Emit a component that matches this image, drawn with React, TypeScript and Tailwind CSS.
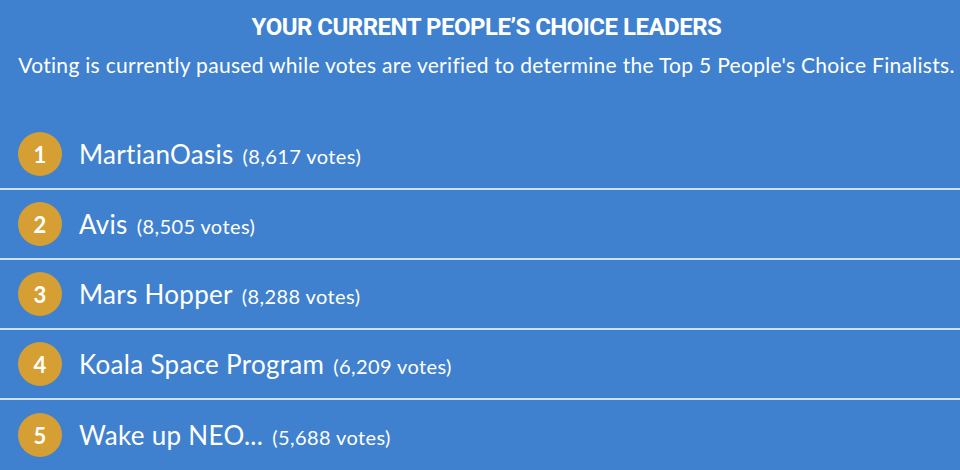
import React from 'react'

interface Leader {
  rank: number
  name: string
  votes: string
}

const leaders: Leader[] = [
  { rank: 1, name: 'MartianOasis', votes: '8,617' },
  { rank: 2, name: 'Avis', votes: '8,505' },
  { rank: 3, name: 'Mars Hopper', votes: '8,288' },
  { rank: 4, name: 'Koala Space Program', votes: '6,209' },
  { rank: 5, name: 'Wake up NEO...', votes: '5,688' },
]

const App = () => {
  return (
    <div className="w-[960px] h-[470px] bg-[#3f81cf] text-white overflow-hidden font-['Lato',sans-serif]">
      <div className="text-center pt-[12px] pl-[13px]">
        <h2 className="text-[24px] leading-[30px] font-bold tracking-[-0.5px] font-['Roboto',sans-serif]">
          YOUR CURRENT PEOPLE’S CHOICE LEADERS
        </h2>
        <p className="mt-[9px] text-[21px] leading-[28px] tracking-[0.3px] whitespace-nowrap">
          Voting is currently paused while votes are verified to determine the Top 5 People's Choice Finalists.
        </p>
      </div>

      <ul className="mt-[41px]">
        {leaders.map((l, i) => (
          <li
            key={l.rank}
            className={
              'h-[70px] flex items-center pl-[18px] ' +
              (i < leaders.length - 1 ? 'border-b-2 border-[#cfe1f5]' : '')
            }
          >
            <span className="w-[44px] h-[44px] rounded-full bg-[#d59f33] flex items-center justify-center text-[22px] font-bold">
              {l.rank}
            </span>
            <span className="ml-[17px] text-[26px] tracking-[0.3px]">{l.name}</span>
            <span className="ml-[9px] text-[20px] tracking-[0.4px] mt-[3px]">({l.votes} votes)</span>
          </li>
        ))}
      </ul>
    </div>
  )
}

export default App
